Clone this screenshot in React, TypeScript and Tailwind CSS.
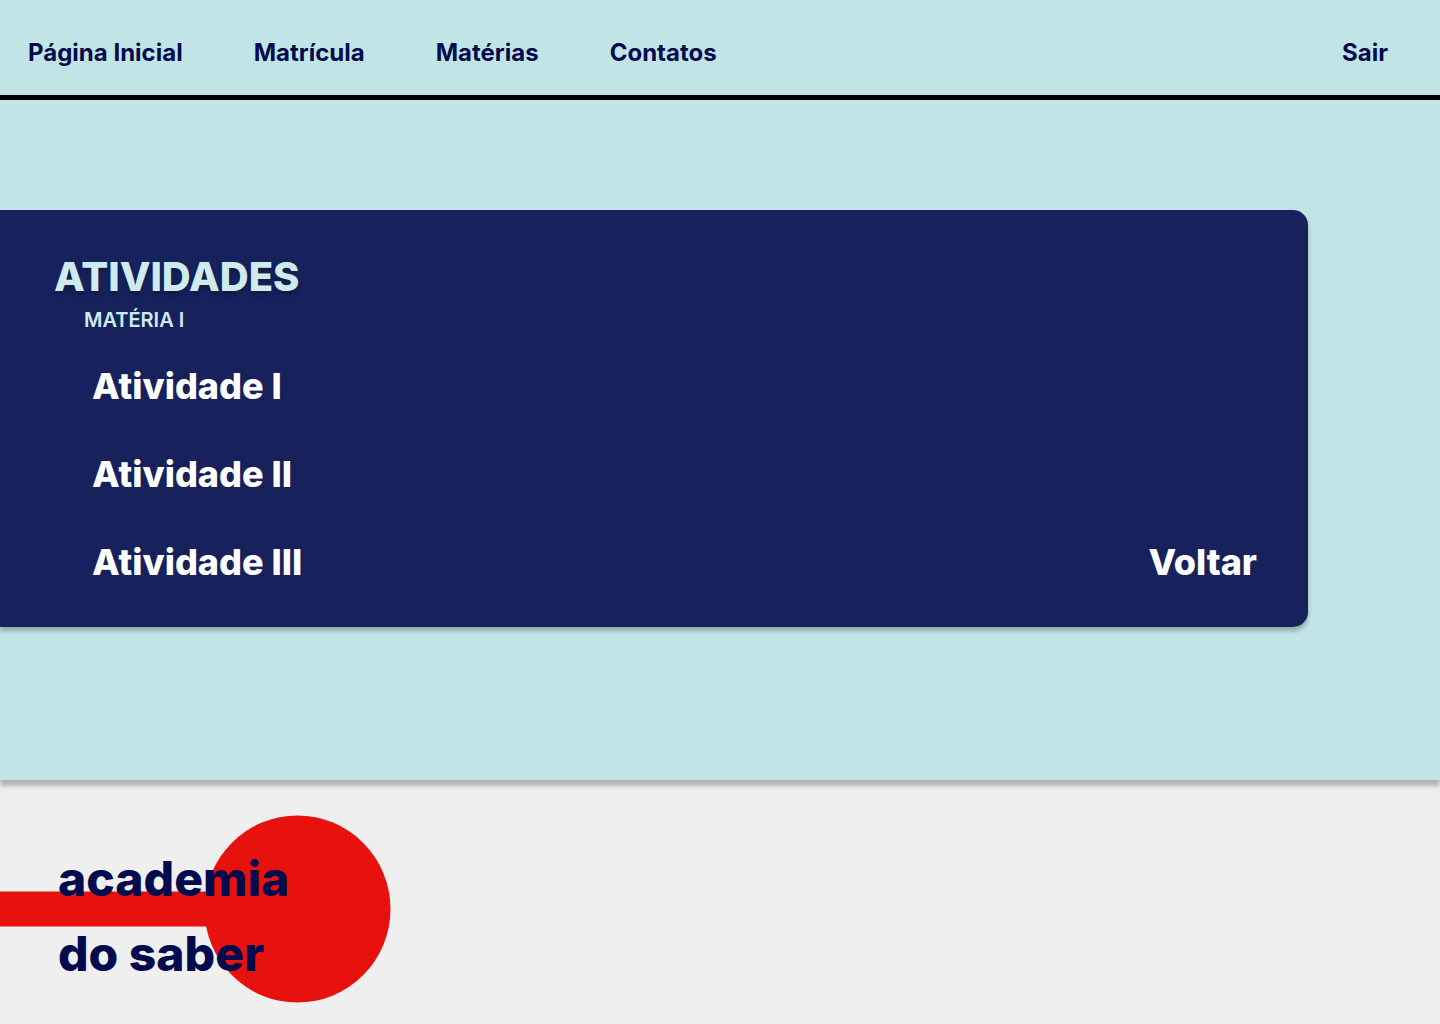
const links = ["Página Inicial", "Matrícula", "Matérias", "Contatos"];
const activities = ["Atividade I", "Atividade II", "Atividade III"];

export default function App() {
  return (
    <div className="flex min-h-screen flex-col bg-[#efefef] font-['Inter',sans-serif] text-[#030a4d]">
      <div className="relative bg-[#c1e4e7] pb-[153px] shadow-[0_6px_4px_rgba(0,0,0,0.25)]">
        <nav className="flex items-center border-b-5 border-black pt-[38px] pr-[52px] pb-[27px] pl-7 text-2xl leading-[30px] font-bold">
          <div className="flex gap-[71px]">
            {links.map((l) => (
              <a key={l} href="#">{l}</a>
            ))}
          </div>
          <a href="#" className="ml-auto">Sair</a>
        </nav>
        <main className="mt-[110px] mr-[132px] flex items-end justify-between rounded-r-[15px] bg-[#17225d] pt-[42px] pr-[51px] pb-[41px] pl-[54px] text-white shadow-[0_4px_4px_rgba(0,0,0,0.25)]">
          <div>
            <h1 className="text-[40px] leading-[50px] font-extrabold text-[#ceebee] [text-shadow:0_4px_4px_rgba(0,0,0,0.25)]">ATIVIDADES</h1>
            <h2 className="ml-[30px] pt-1 text-xl leading-7 font-semibold text-[#ceebee]">MATÉRIA I</h2>
            <ul className="mt-7 ml-[38px] flex flex-col gap-10 text-4xl leading-[48px] font-extrabold">
              {activities.map((a) => (
                <li key={a}><a href="#">{a}</a></li>
              ))}
            </ul>
          </div>
          <button type="button" className="text-4xl leading-[48px] font-extrabold">Voltar</button>
        </main>
      </div>
      <footer className="relative h-[244px] overflow-hidden">
        <svg className="absolute top-0 left-0" width="400" height="244" viewBox="0 0 400 244" aria-hidden="true">
          <rect x="0" y="111.500" width="220" height="35" fill="#e7120d" />
          <ellipse cx="297.500" cy="129" rx="93" ry="93.500" fill="#e7120d" />
        </svg>
        <p className="relative pt-[61px] pl-[58px] text-5xl leading-[75px] font-extrabold">
          academia
          <br />
          do saber
        </p>
      </footer>
    </div>
  );
}
